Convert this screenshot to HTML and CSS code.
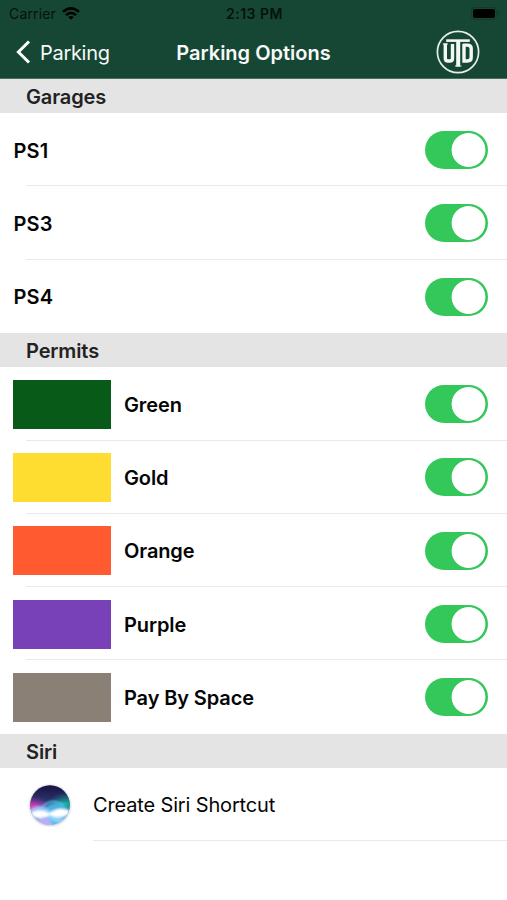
FILE: index.html
```html
<!DOCTYPE html>
<html lang="en">
<head>
<meta charset="utf-8">
<title>Parking Options</title>
<link rel="stylesheet" href="styles.css">
</head>
<body>
<header class="header">
  <div class="status">
    <div class="carrier"><span>Carrier</span>
      <svg class="wifi" width="18" height="13" viewBox="0 0 18 13"><g fill="none" stroke="#000" stroke-width="2.5"><path d="M1 4.9Q9-2.1 17 4.9"/><path d="M4 8.1Q9 3.6 14 8.1"/></g><path d="M6.3 10.1Q9 8 11.7 10.1L9 12.8Z"/></svg>
    </div>
    <div class="time">2:13 PM</div>
    <svg class="battery" width="29" height="13" viewBox="0 0 29 13"><rect x=".5" y=".5" width="25" height="12" rx="3.5" fill="none" stroke="#113b2b"/><rect x="2" y="2" width="22" height="9" rx="2"/><path d="M27 4.5Q29 6.5 27 8.5Z" fill="#0d3526"/></svg>
  </div>
  <nav class="nav">
    <div class="back"><svg width="16" height="24" viewBox="0 0 16 24"><path d="M14 1.5L3.4 12l10.6 10.5" fill="none" stroke="#fff" stroke-width="3"/></svg><span>Parking</span></div>
    <h1 class="title">Parking Options</h1>
    <svg class="logo" width="44" height="44" viewBox="0 0 44 44" role="img" aria-label="UTD">
      <circle cx="22" cy="22" r="20.6" fill="none" stroke="#e6efea" stroke-width="1.7"/>
      <g fill="none" stroke="#f3f8f5">
        <path stroke-width="3.4" d="M9.3 13.5V28.2Q9.3 31 12 31H13.8Q16.5 31 16.5 28.2V14"/>
        <path stroke-width="3.4" d="M28 14V31H31.3Q35.2 31 35.2 27.5V18.5Q35.2 15.1 31.3 15.1H27"/>
        <path stroke-width="2.6" d="M10.2 10.6H33.8"/>
        <path stroke-width="4" d="M22.2 10V36.5"/>
        <path stroke-width="1.2" d="M6.8 14H12M19 36H25.4"/>
      </g>
    </svg>
  </nav>
</header>
<main>
  <h2 class="section">Garages</h2>
  <div class="row"><span class="label">PS1</span><i class="switch"></i></div>
  <div class="row"><span class="label">PS3</span><i class="switch"></i></div>
  <div class="row last"><span class="label">PS4</span><i class="switch"></i></div>
  <h2 class="section">Permits</h2>
  <div class="row"><i class="swatch green"></i><span class="label">Green</span><i class="switch"></i></div>
  <div class="row"><i class="swatch gold"></i><span class="label">Gold</span><i class="switch"></i></div>
  <div class="row"><i class="swatch orange"></i><span class="label">Orange</span><i class="switch"></i></div>
  <div class="row"><i class="swatch purple"></i><span class="label">Purple</span><i class="switch"></i></div>
  <div class="row last"><i class="swatch space"></i><span class="label">Pay By Space</span><i class="switch"></i></div>
  <h2 class="section">Siri</h2>
  <div class="row siri">
    <svg class="orb" width="44" height="44" viewBox="0 0 44 44">
      <defs>
        <clipPath id="disc"><circle cx="22" cy="22" r="19.8"/></clipPath>
        <linearGradient id="sky" x1="0" y1="0" x2="0" y2="1"><stop offset="0" stop-color="#160d3d"/><stop offset=".4" stop-color="#29336b"/><stop offset=".65" stop-color="#4a8fd0"/><stop offset="1" stop-color="#a5b9ee"/></linearGradient>
        <radialGradient id="pink"><stop offset="0" stop-color="#fa35bd"/><stop offset="1" stop-color="#b02bb0" stop-opacity="0"/></radialGradient>
        <radialGradient id="teal"><stop offset="0" stop-color="#19b8a5"/><stop offset="1" stop-color="#128589" stop-opacity="0"/></radialGradient>
        <filter id="soft" x="-20%" y="-50%" width="140%" height="200%"><feGaussianBlur stdDeviation=".8"/></filter>
      </defs>
      <circle cx="22" cy="22.5" r="20.5" fill="#c9c9d2" filter="url(#soft)"/>
      <g clip-path="url(#disc)">
        <rect width="44" height="44" fill="url(#sky)"/>
        <ellipse cx="5" cy="24" rx="18" ry="11" fill="url(#pink)"/>
        <ellipse cx="38" cy="21" rx="17" ry="12" fill="url(#teal)"/>
        <g filter="url(#soft)">
          <path d="M14 31C20 16 34 18 43 29V44H18Z" fill="#4fbdf0" opacity=".8"/>
          <path d="M14 24Q24 14 36 22" fill="none" stroke="#55d5ed" stroke-width="1.5"/>
          <path d="M1 27Q13 18 23 29T43 34V40Q30 42 20 35T1 34Z" fill="#9adcff" opacity=".8"/>
          <path d="M1 31Q11 24 21 30.5Q32 22 43 29Q33 38 22 32Q11 39 1 31Z" fill="#fff"/>
          <path d="M10 37Q19 30 25 43H13Z" fill="#bcaef4"/>
        </g>
      </g>
    </svg>
    <span class="shortcut">Create Siri Shortcut</span>
  </div>
</main>
</body>
</html>
```
FILE: styles.css
```css
* { box-sizing: border-box; }
body { margin: 0; background: #fff; color: #050505; font-family: Inter, "Liberation Sans", sans-serif; }
.header { height: 79px; background: #164734; border-bottom: 1px solid #4a6f60; }
.status { height: 27px; display: grid; grid-template-columns: 1fr auto 1fr; align-items: center; padding: 0 7px 0 9px; font-size: 14px; color: #06120d; }
.carrier { display: flex; align-items: center; gap: 6px; letter-spacing: .15px; }
.time { font-weight: 600; letter-spacing: .5px; }
.battery { justify-self: end; }
.nav { height: 50px; display: grid; grid-template-columns: 1fr auto 1fr; align-items: center; padding: 0 27px 0 15px; color: #f8faf9; }
.back { display: flex; align-items: center; gap: 9px; font-size: 20px; letter-spacing: -.3px; }
.back span { padding-top: 1px; }
.title { margin: 0 0 0 12px; padding-top: 1px; font-size: 20px; font-weight: 600; letter-spacing: 0; }
.logo { justify-self: end; }
.section { margin: 0; height: 34.2px; display: flex; align-items: center; padding: 2px 26px 0; background: #e4e4e4; color: #222; font-size: 20px; font-weight: 600; letter-spacing: -.12px; }
.row { height: 73.3px; display: flex; align-items: center; padding: .5px 19px 0 13px; background: linear-gradient(#e9e9e9, #e9e9e9) 26px 100% / 100% 1px no-repeat; }
.row.last { background: none; }
.label { padding-top: 1px; font-size: 20px; font-weight: 600; letter-spacing: -.12px; }
.label:first-child { margin-left: .6px; letter-spacing: .1px; }
.switch { margin-left: auto; width: 63px; height: 38px; border-radius: 19px; background: radial-gradient(circle at 43.5px 19px, #fff 16.5px, #34c759 17.3px); }
.swatch { width: 98px; height: 49px; margin-right: 13px; }
.green { background: #085a18; }
.gold { background: #ffdc30; }
.orange { background: #ff5a30; }
.purple { background: #7841b8; }
.space { background: #8a8076; }
.siri { padding-left: 28px; background-position: 93px 100%; }
.shortcut { margin-left: 21px; padding-top: 1px; font-size: 20px; letter-spacing: -.15px; }
```
